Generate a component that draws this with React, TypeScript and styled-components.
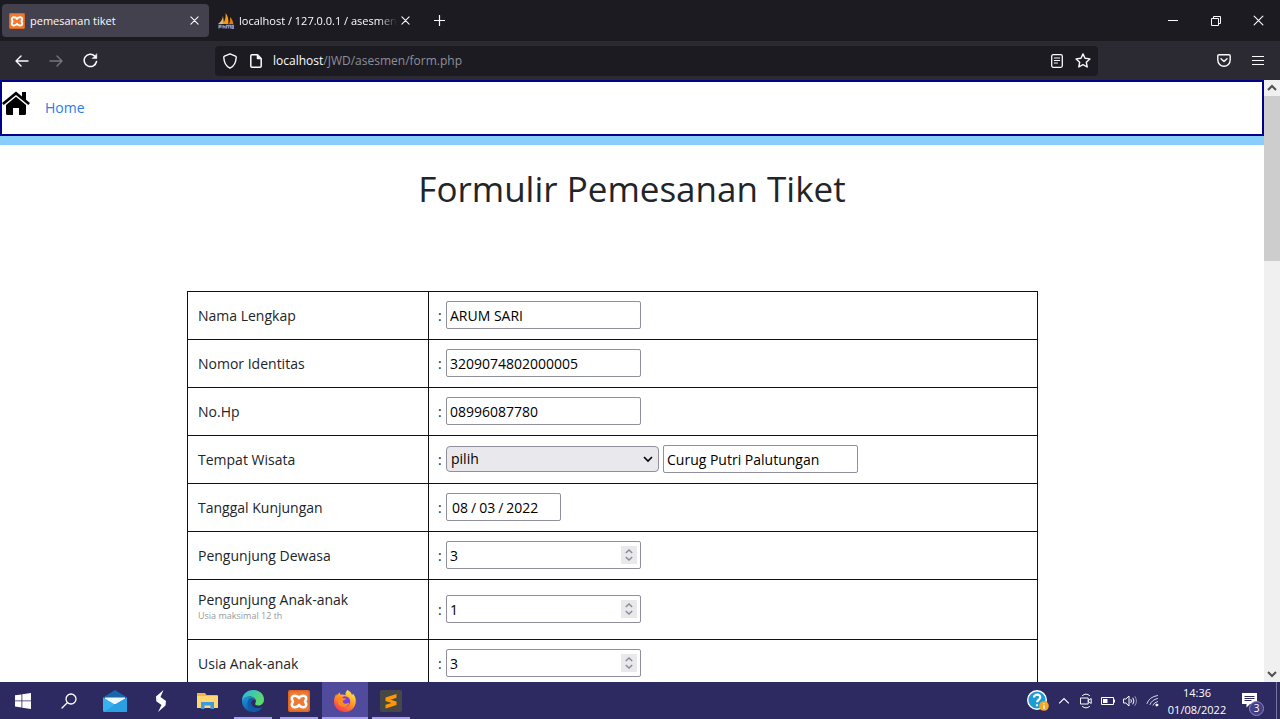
import React from 'react';
import styled, { createGlobalStyle } from 'styled-components';

const GlobalStyle = createGlobalStyle`
  *, *::before, *::after { box-sizing: border-box; }
  body {
    margin: 0;
    font-family: "Open Sans", "Noto Sans", sans-serif;
    font-size: 14px;
    color: #212529;
    background: #fff;
  }
  button, input, select { font: inherit; color: inherit; margin: 0; }
  button { border: 0; padding: 0; background: none; }
  svg { display: block; flex: none; }
`;

const Shell = styled.div`
  display: flex;
  flex-direction: column;
  height: 100vh;
  overflow: hidden;
`;

/* ---------- browser window ---------- */

const TabBar = styled.header`
  display: flex;
  align-items: center;
  flex: none;
  height: 41px;
  padding-left: 2px;
  background: #1c1b22;
  color: #fbfbfe;
  font-size: 11px;
`;

const Tab = styled.div<{ $active?: boolean }>`
  display: flex;
  align-items: center;
  width: ${p => (p.$active ? 207 : 209)}px;
  height: 33px;
  padding: 0 7px 0 7px;
  border-radius: 4px;
  background: ${p => (p.$active ? '#42414d' : 'transparent')};
  margin-right: ${p => (p.$active ? 2 : 0)}px;
`;

const TabTitle = styled.span<{ $fade?: boolean }>`
  flex: 1;
  min-width: 0;
  margin-left: 5px;
  overflow: hidden;
  white-space: nowrap;
  ${p => p.$fade && 'mask-image: linear-gradient(to right, #000 88%, transparent);'}
`;

const IconButton = styled.button<{ $w?: number }>`
  display: flex;
  align-items: center;
  justify-content: center;
  flex: none;
  width: ${p => p.$w ?? 16}px;
  height: 28px;
`;

const WindowControls = styled.div`
  display: flex;
  margin-left: auto;
`;

const Toolbar = styled.nav`
  display: grid;
  grid-template-columns: 215fr 883fr 182fr;
  align-items: center;
  flex: none;
  height: 39px;
  background: #2b2a33;
  color: #fbfbfe;
`;

const ToolGroup = styled.div<{ $end?: boolean }>`
  display: flex;
  padding: ${p => (p.$end ? '0 5px 0 0' : '0 0 0 5px')};
  justify-content: ${p => (p.$end ? 'flex-end' : 'flex-start')};
`;

const AddressBar = styled.div`
  display: flex;
  align-items: center;
  height: 30px;
  padding: 0 2px;
  border-radius: 4px;
  background: #1c1b22;
`;

const Address = styled.div`
  flex: 1;
  padding-left: 4px;
  font-size: 12px;
  color: #8f8f98;
  b { font-weight: 400; color: #fbfbfe; }
`;

/* ---------- page ---------- */

const Viewport = styled.div`
  display: flex;
  flex: 1;
  min-height: 0;
`;

const Page = styled.main`
  flex: 1;
  min-width: 0;
  overflow: hidden;
  background: #fff;
`;

const SiteNav = styled.nav`
  display: flex;
  align-items: center;
  gap: 15px;
  height: 56px;
  border: 2px solid #00008b;
  a { color: #2a7de9; text-decoration: none; line-height: 22px; }
  svg { margin-bottom: 9px; }
`;

const Stripe = styled.div`
  height: 9px;
  background: #87cefa;
`;

const Title = styled.h1`
  margin: 22px 0 0;
  font-size: 35px;
  font-weight: 400;
  line-height: 44px;
  text-align: center;
`;

const FormArea = styled.form`
  width: 890px;
  max-width: 100%;
  margin: 80px auto 0;
`;

const Table = styled.table`
  width: 851px;
  max-width: 100%;
  border-collapse: collapse;
  table-layout: fixed;
  th, td {
    height: 48px;
    border: 1px solid #111;
    text-align: left;
    font-weight: 400;
    line-height: 22px;
  }
  th { width: 241px; padding: 9px 10px; }
  td { padding: 8px 9px 10px; }
`;

const Hint = styled.small`
  display: block;
  margin-bottom: 9px;
  font-size: 9px;
  line-height: 10px;
  color: #999;
`;

const FieldLine = styled.div`
  display: flex;
  align-items: center;
  gap: 4px;
`;

const Colon = styled.span`
  width: 4px;
  padding-top: 2px;
`;

const TextInput = styled.input`
  width: 195px;
  height: 28px;
  padding: 2px 3px 0;
  border: 1px solid #8f8f9d;
  border-radius: 2px;
  background: #fff;
  color: #000;
  outline: 0;
`;

const DateInput = styled(TextInput)`
  width: 115px;
  padding-left: 4px;
  &::-webkit-calendar-picker-indicator { display: none; }
  &::-webkit-datetime-edit-text { padding: 0 2px; }
`;

const NumberBox = styled.div`
  display: flex;
  align-items: center;
  width: 195px;
  height: 28px;
  padding-right: 3px;
  border: 1px solid #8f8f9d;
  border-radius: 2px;
`;

const NumberInput = styled.input`
  flex: 1;
  min-width: 0;
  height: 26px;
  padding: 2px 3px 0;
  border: 0;
  background: none;
  color: #000;
  outline: 0;
  appearance: textfield;
  &::-webkit-inner-spin-button { appearance: none; margin: 0; }
`;

const Spinner = styled.span`
  display: flex;
  align-items: center;
  justify-content: center;
  width: 16px;
  height: 18px;
  background: #e9e9ed;
`;

const SelectBox = styled.span`
  display: grid;
  align-items: center;
  width: 213px;
  height: 26px;
  select, svg { grid-area: 1 / 1; }
  svg { justify-self: end; margin-right: 6px; pointer-events: none; }
`;

const Select = styled.select`
  width: 100%;
  height: 26px;
  padding: 0 4px;
  border: 1px solid #8f8f9d;
  border-radius: 4px;
  background: #e9e9ed;
  color: #000;
  appearance: none;
`;

/* ---------- scroll bar ---------- */

const ScrollRail = styled.div`
  display: flex;
  flex-direction: column;
  flex: none;
  width: 16px;
  background: #f0f0f0;
`;

const ScrollTrack = styled.div`
  flex: 1;
`;

const ScrollThumb = styled.div`
  height: 29%;
  background: #cdcdcd;
`;

const ScrollArrow = styled.button`
  display: grid;
  place-items: center;
  width: 16px;
  height: 16px;
`;

/* ---------- taskbar ---------- */

const Taskbar = styled.footer`
  display: flex;
  justify-content: space-between;
  flex: none;
  height: 37px;
  background: #2d2961;
  color: #fff;
`;

const Apps = styled.div`
  display: flex;
`;

const AppButton = styled.button<{ $open?: boolean; $active?: boolean }>`
  display: flex;
  align-items: center;
  justify-content: center;
  width: 46px;
  background: ${p => {
    const fill = p.$active ? '#504b9c' : 'transparent';
    if (!p.$open) return fill;
    return `linear-gradient(#a8a0ec, #a8a0ec) center bottom / ${p.$active ? 46 : 38}px 2px no-repeat ${fill}`;
  }};
`;

const Tray = styled.div`
  display: flex;
  align-items: center;
  &::after {
    content: "";
    width: 4px;
    height: 100%;
    margin-left: 7px;
    border-left: 1px solid #77749c;
  }
`;

const Clock = styled.time`
  width: 68px;
  font-size: 11px;
  line-height: 17px;
  text-align: center;
  white-space: nowrap;
`;

const NoticeButton = styled(IconButton)`
  position: relative;
`;

const Badge = styled.span`
  position: absolute;
  right: 5px;
  bottom: -1px;
  width: 15px;
  height: 15px;
  border: 1px solid #8b88c4;
  border-radius: 50%;
  background: #443f86;
  font-size: 10px;
  line-height: 13px;
  text-align: center;
`;

/* ---------- drawings ---------- */

const stroke = { fill: 'none', stroke: 'currentColor', strokeLinecap: 'round', strokeLinejoin: 'round' } as const;

const XamppIcon = ({ size }: { size: number }) => (
  <svg width={size} height={size} viewBox="0 0 22 22">
    <rect width="22" height="22" rx="2" fill="#e0661f" />
    <rect x="1.500" y="1.500" width="19" height="19" rx="2" fill="#ee7a33" />
    <path
      d="M11 8.200C12.500 5.400 18.400 4.600 18.200 8.600 18.100 10.200 17 10.600 17 11.500S18.100 12.800 18.200 14.400C18.400 18.400 12.500 17.600 11 14.800 9.500 17.600 3.600 18.400 3.800 14.400 3.900 12.800 5 12.400 5 11.500S3.900 10.200 3.800 8.600C3.600 4.600 9.500 5.400 11 8.200z"
      fill="none"
      stroke="#fff"
      strokeWidth="2.500"
      strokeLinejoin="round"
    />
  </svg>
);

const PhpMyAdminIcon = () => (
  <svg width="16" height="16" viewBox="0 0 16 16">
    <path d="M0 11C3 9 4.500 6 5 3l1 8z" fill="#e0b57a" />
    <path d="M5 11C7 8 8 4 7.600 0c2.600 3 3.200 7 2.800 11z" fill="#f89c0e" />
    <path d="M11 11c1-2 1.400-4 1-7 2 2 3.200 4.500 3.300 7z" fill="#e57d10" />
    <path d="M1 15.500v-3h2v1.500H1.500M5 12v3.500m0-2h2v2M8.500 15.500v-3h2v3m0-3h2v3M14 15.500v-3h1.500v3z" fill="none" stroke="#8c90b5" strokeWidth="1.300" />
  </svg>
);

const Cross = ({ size = 8, w = 1.2 }: { size?: number; w?: number }) => (
  <svg width={size} height={size} viewBox="0 0 10 10" {...stroke} strokeWidth={w}>
    <path d="M1 1l8 8M9 1L1 9" />
  </svg>
);

const Chevron = ({ up, size = 10, color = '#000', w = 1.6 }: { up?: boolean; size?: number; color?: string; w?: number }) => (
  <svg width={size} height={size} viewBox="0 0 10 10" fill="none" stroke={color} strokeWidth={w}>
    <path d={up ? 'M1 7l4-4 4 4' : 'M1 3l4 4 4-4'} />
  </svg>
);

const HouseIcon = () => (
  <svg width="28" height="25" viewBox="0 0 28 25">
    <path d="M14 .5L0 12l1.700 2L14 4l12.300 10L28 12l-4-3.300V1h-4v4.400z" fill="#000" />
    <path d="M14 5.800L4 14v8.500Q4 24 5.500 24H11v-7h6v7h5.500q1.500 0 1.500-1.500V14z" fill="#000" />
  </svg>
);

const EdgeIcon = () => (
  <svg width="24" height="24" viewBox="0 0 24 24">
    <defs>
      <linearGradient id="edgeTop" x1="0" y1="0" x2="1" y2="0.500">
        <stop offset="0" stopColor="#2bb3e8" />
        <stop offset="1" stopColor="#5ddc63" />
      </linearGradient>
      <linearGradient id="edgeBody" x1="0" y1="0" x2="0.600" y2="1">
        <stop offset="0" stopColor="#1b9de2" />
        <stop offset="1" stopColor="#0c4f9e" />
      </linearGradient>
    </defs>
    <path d="M1 12C1 5 6 1 12 1c7 0 11 4.500 11 9.500 0 4-3 6-6 6-2.500 0-3.500-1-2.500-2.500C16 11 13 7.500 9 7.500c-4 0-7 2-8 4.500z" fill="url(#edgeTop)" />
    <path d="M1 12c1-3 4-4.500 7.500-4.500 3 0 5 1.700 5.500 3.500-4-1-5 3-3 6 2.200 3 7 3.500 10.500 1C19.500 21.500 16 23 12 23 5.500 23 1 18 1 12z" fill="url(#edgeBody)" />
    <path d="M8.500 9.500C5 12.500 6 20 12 23c3.800.2 7.500-1.500 9.500-5-3.500 2-8 1.500-10.200-1.200C9.200 14.300 9.800 11 13 10.400c-1-1.400-3-1.900-4.500-.9z" fill="#135ba8" />
  </svg>
);

const FirefoxIcon = () => (
  <svg width="24" height="24" viewBox="0 0 24 24">
    <defs>
      <linearGradient id="foxBody" x1="0.800" y1="0" x2="0.200" y2="1">
        <stop offset="0" stopColor="#fff04a" />
        <stop offset="0.450" stopColor="#ff9a22" />
        <stop offset="1" stopColor="#fa2c5c" />
      </linearGradient>
    </defs>
    <path d="M14.500 1c3.500 1.800 4.200 4 4.600 5.200L20 4.500c2 2.500 3 5 2.800 8C22.500 18.800 18 23 12 23S1 18.500 1 12.500c0-3.500 1.200-6 2.500-7.500l.3 1.800C5 4.500 5.800 4 7 3.500l.2 2.300c2-.6 4-.2 5.300.6C12 4.500 13 2.200 14.500 1z" fill="url(#foxBody)" />
    <circle cx="12" cy="12.500" r="5.200" fill="#7a3fe0" />
    <path d="M5 9c2-1.500 4-1 5.500.2l2.500.4c.2 1-2 1.700-3 2.200-.6 2 1.500 3.600 4 2.600 1.600-.6 2.200-.2 2 .4-1 2.600-4.200 4-7 3C5.500 16.600 4 13 5 9z" fill="#ff8a1e" />
  </svg>
);

const MailIcon = () => (
  <svg width="24" height="22" viewBox="0 0 24 22">
    <path d="M0 7.500L12 0l12 7.500v4H0z" fill="#1767ab" />
    <path d="M2 7.500h20V14H2z" fill="#f2f8fc" />
    <path d="M0 7.500l12 7 12-7v13q0 1.500-1.500 1.500h-21Q0 22 0 20.500z" fill="#35b3ee" />
    <path d="M1 22L12 14.500 24 7.500v13q0 1.500-1.500 1.500z" fill="#2a9fe4" />
  </svg>
);

const FolderIcon = () => (
  <svg width="21" height="17" viewBox="0 0 21 17">
    <path d="M0 1h8l1.500 2H20q1 0 1 1v12H0z" fill="#f4b73c" />
    <path d="M0 4h21v12H0z" fill="#ffd873" />
    <path d="M4 17v-7h13v7h-3.500v-3.500h-6V17z" fill="#3d9be0" />
  </svg>
);

const TextField = ({ id, value }: { id: string; value: string }) => <TextInput id={id} type="text" defaultValue={value} />;

const NumberField = ({ id, value }: { id: string; value: number }) => (
  <NumberBox>
    <NumberInput id={id} type="number" defaultValue={value} />
    <Spinner>
      <svg width="8" height="12" viewBox="0 0 8 12" fill="none" stroke="#8b8b95" strokeWidth="1.500">
        <path d="M.8 4L4 1l3.200 3M.8 8L4 11l3.200-3" />
      </svg>
    </Spinner>
  </NumberBox>
);

const Row = ({ id, label, hint, children }: { id: string; label: string; hint?: string; children: React.ReactNode }) => (
  <tr>
    <th scope="row">
      <label htmlFor={id}>{label}</label>
      {hint && <Hint>{hint}</Hint>}
    </th>
    <td>
      <FieldLine>
        <Colon>:</Colon>
        {children}
      </FieldLine>
    </td>
  </tr>
);

export default function App() {
  return (
    <Shell>
      <GlobalStyle />
      <TabBar>
        <Tab $active>
          <XamppIcon size={16} />
          <TabTitle>pemesanan tiket</TabTitle>
          <IconButton aria-label="Close tab"><Cross size={9} /></IconButton>
        </Tab>
        <Tab>
          <PhpMyAdminIcon />
          <TabTitle $fade>localhost / 127.0.0.1 / asesmen /</TabTitle>
          <IconButton aria-label="Close tab"><Cross size={9} /></IconButton>
        </Tab>
        <IconButton $w={38} aria-label="New tab">
          <svg width="11" height="11" viewBox="0 0 11 11" {...stroke} strokeWidth="1.200"><path d="M5.500 .5v10M.5 5.500h10" /></svg>
        </IconButton>
        <WindowControls>
          <IconButton $w={43} aria-label="Minimize">
            <svg width="10" height="10" viewBox="0 0 10 10" {...stroke}><path d="M0 4.500h10" /></svg>
          </IconButton>
          <IconButton $w={43} aria-label="Restore">
            <svg width="10" height="10" viewBox="0 0 10 10" fill="none" stroke="currentColor"><path d="M.5 2.500h7v7h-7zM2.500 2.500v-2h7v7h-2" /></svg>
          </IconButton>
          <IconButton $w={43} aria-label="Close"><Cross size={11} w={1} /></IconButton>
        </WindowControls>
      </TabBar>

      <Toolbar>
        <ToolGroup>
          <IconButton $w={34} aria-label="Back">
            <svg width="14" height="12" viewBox="0 0 14 12" {...stroke} strokeWidth="1.400"><path d="M13 6H1m5-5L1 6l5 5" /></svg>
          </IconButton>
          <IconButton $w={34} aria-label="Forward">
            <svg width="14" height="12" viewBox="0 0 14 12" {...stroke} stroke="#77767f" strokeWidth="1.400"><path d="M1 6h12M8 1l5 5-5 5" /></svg>
          </IconButton>
          <IconButton $w={34} aria-label="Reload">
            <svg width="15" height="15" viewBox="0 0 15 15" {...stroke} strokeWidth="1.500">
              <path d="M13.500 8.500A6.200 6.200 0 1 1 11.800 3l1 1" />
              <path d="M13.800 1v4.500H9.300z" fill="currentColor" strokeWidth=".5" />
            </svg>
          </IconButton>
        </ToolGroup>
        <AddressBar>
          <IconButton $w={26} aria-label="Tracking protection">
            <svg width="14" height="16" viewBox="0 0 14 16" {...stroke} strokeWidth="1.400"><path d="M7 .8l5.500 2.400q.8.400.7 1.300C13 9 11.500 13 7 15.200 2.500 13 1 9 .8 4.500q-.1-.9.700-1.300z" /></svg>
          </IconButton>
          <IconButton $w={26} aria-label="Site information">
            <svg width="12" height="14" viewBox="0 0 12 14" {...stroke} strokeWidth="1.500">
              <path d="M2 .8h5.500l3.700 3.700V12q0 1.200-1.200 1.200H2Q.8 13.200.8 12V2Q.8.800 2 .8z" />
              <path d="M7 1v4h4z" fill="currentColor" strokeWidth=".5" />
            </svg>
          </IconButton>
          <Address><b>localhost</b>/JWD/asesmen/form.php</Address>
          <IconButton $w={26} aria-label="Reader view">
            <svg width="12" height="14" viewBox="0 0 12 14" {...stroke} strokeWidth="1.300">
              <rect x=".7" y=".7" width="10.600" height="12.600" rx="1.500" />
              <path d="M3.300 4h5.400M3.300 6.500h5.400M3.300 9h3.200" strokeWidth="1" />
            </svg>
          </IconButton>
          <IconButton $w={26} aria-label="Bookmark">
            <svg width="16" height="15" viewBox="0 0 16 15" {...stroke} strokeWidth="1.400"><path d="M8 .9l2 4.400 4.900.6-3.600 3.300.9 4.800L8 11.700 3.800 14l.9-4.800L1.100 5.900 6 5.300z" /></svg>
          </IconButton>
        </AddressBar>
        <ToolGroup $end>
          <IconButton $w={34} aria-label="Pocket">
            <svg width="14" height="13" viewBox="0 0 14 13" {...stroke} strokeWidth="1.400"><path d="M2 .8h10q1.200 0 1.200 1.200v4a6.200 6.200 0 0 1-12.400 0V2Q.8.800 2 .8zM4 4.800l3 2.800 3-2.800" /></svg>
          </IconButton>
          <IconButton $w={34} aria-label="Menu">
            <svg width="12" height="11" viewBox="0 0 12 11" {...stroke} strokeWidth="1.200"><path d="M.5 1.500h11M.5 5.500h11M.5 9.500h11" /></svg>
          </IconButton>
        </ToolGroup>
      </Toolbar>

      <Viewport>
        <Page>
          <SiteNav>
            <HouseIcon />
            <a href="#home">Home</a>
          </SiteNav>
          <Stripe />
          <Title>Formulir Pemesanan Tiket</Title>
          <FormArea>
            <Table>
              <tbody>
                <Row id="nama" label="Nama Lengkap"><TextField id="nama" value="ARUM SARI" /></Row>
                <Row id="identitas" label="Nomor Identitas"><TextField id="identitas" value="3209074802000005" /></Row>
                <Row id="hp" label="No.Hp"><TextField id="hp" value="08996087780" /></Row>
                <Row id="wisata" label="Tempat Wisata">
                  <SelectBox>
                    <Select id="wisata" defaultValue="pilih"><option>pilih</option></Select>
                    <Chevron />
                  </SelectBox>
                  <TextInput type="text" aria-label="Nama tempat wisata" defaultValue="Curug Putri Palutungan" />
                </Row>
                <Row id="tanggal" label="Tanggal Kunjungan"><DateInput id="tanggal" type="date" defaultValue="2022-08-03" /></Row>
                <Row id="dewasa" label="Pengunjung Dewasa"><NumberField id="dewasa" value={3} /></Row>
                <Row id="anak" label="Pengunjung Anak-anak" hint="Usia maksimal 12 th"><NumberField id="anak" value={1} /></Row>
                <Row id="usia" label="Usia Anak-anak"><NumberField id="usia" value={3} /></Row>
              </tbody>
            </Table>
          </FormArea>
        </Page>
        <ScrollRail>
          <ScrollArrow aria-label="Scroll up"><Chevron up color="#505050" w={2} /></ScrollArrow>
          <ScrollTrack><ScrollThumb /></ScrollTrack>
          <ScrollArrow aria-label="Scroll down"><Chevron color="#505050" w={2} /></ScrollArrow>
        </ScrollRail>
      </Viewport>

      <Taskbar>
        <Apps>
          <AppButton aria-label="Start">
            <svg width="16" height="16" viewBox="0 0 16 16" fill="#fff"><path d="M0 2.300l6.500-.9v6.100H0zM7.300 1.300L16 0v7.500H7.300zM0 8.300h6.500v6.100L0 13.500zM7.300 8.300H16V16l-8.700-1.300z" /></svg>
          </AppButton>
          <AppButton aria-label="Search">
            <svg width="16" height="16" viewBox="0 0 16 16" {...stroke} strokeWidth="1.300"><circle cx="10" cy="6" r="5" /><path d="M6.300 9.700L1 15" /></svg>
          </AppButton>
          <AppButton aria-label="Mail"><MailIcon /></AppButton>
          <AppButton aria-label="Shortcut app">
            <svg width="12" height="22" viewBox="0 0 12 22" fill="#fff"><path d="M8.500 0L1 6.500l.3 4.800L6.500 15 3 22l7.500-6.500.5-4.500L5.500 7z" /></svg>
          </AppButton>
          <AppButton aria-label="File Explorer"><FolderIcon /></AppButton>
          <AppButton $open aria-label="Edge"><EdgeIcon /></AppButton>
          <AppButton $open aria-label="XAMPP"><XamppIcon size={22} /></AppButton>
          <AppButton $open $active aria-label="Firefox"><FirefoxIcon /></AppButton>
          <AppButton $open aria-label="Sublime Text">
            <svg width="22" height="22" viewBox="0 0 22 22">
              <rect width="22" height="22" rx="2" fill="#474747" />
              <path d="M5.500 7.500L16.500 4v3.800L10.500 9.700l6 1.900v3.500L5.500 18.500v-3.700l6-1.900-6-1.900z" fill="#ff9800" />
            </svg>
          </AppButton>
        </Apps>
        <Tray>
          <IconButton $w={30} aria-label="Help">
            <svg width="22" height="22" viewBox="0 0 22 22">
              <circle cx="10" cy="10" r="9.300" fill="#1d9bd7" stroke="#fff" strokeWidth="1.400" />
              <path d="M7 7.500C7 3.500 13.500 3.800 13.200 7.500 13 9.800 10 9.800 10 12.300M10 14.200v2" fill="none" stroke="#fff" strokeWidth="2.200" />
              <circle cx="17" cy="16" r="4.800" fill="#f5a623" />
              <path d="M17 13v1.200M17 15.200V19" stroke="#fff" strokeWidth="1.300" />
            </svg>
          </IconButton>
          <IconButton $w={22} aria-label="Show hidden icons"><Chevron up size={12} color="#fff" w={1} /></IconButton>
          <IconButton $w={22} aria-label="Meet now">
            <svg width="12" height="16" viewBox="0 0 12 16" {...stroke}><path d="M2.500 2.500q3.500-3 7 0M2.500 13.500q3.500 3 7 0M.8 5h7.400v6H.8zM8.200 7.500l3-2v5l-3-2" /></svg>
          </IconButton>
          <IconButton $w={22} aria-label="Battery">
            <svg width="14" height="8" viewBox="0 0 14 8"><path d="M.5 .5h12v7H.5zM13.500 2.500v3" fill="none" stroke="#fff" /><path d="M2 2h4.500v4H2z" fill="#fff" /></svg>
          </IconButton>
          <IconButton $w={22} aria-label="Volume">
            <svg width="15" height="12" viewBox="0 0 15 12" {...stroke}><path d="M.8 4h2L6 1v10L2.800 8h-2zM8 4.500q1 1.500 0 3M10 3q2 3 0 6" /><path d="M12 1.500q3 4.500 0 9" opacity=".5" /></svg>
          </IconButton>
          <IconButton $w={22} aria-label="Network">
            <svg width="13" height="13" viewBox="0 0 13 13" {...stroke}><path d="M1 9.500Q3 3 11.500 1.500M4 10.500Q5.500 6 11.500 4.500M7 11.200Q8 8.500 11.500 7.500" opacity=".8" /><circle cx="10.800" cy="11" r="1" fill="#fff" /></svg>
          </IconButton>
          <Clock>14:36<br />01/08/2022</Clock>
          <NoticeButton $w={38} aria-label="Notifications, 3 new">
            <svg width="16" height="16" viewBox="0 0 16 16"><path d="M0 0h15v11H8l-3.500 3.500V11H0z" fill="#fff" /><path d="M2.500 3.500h10M2.500 5.500h10M2.500 7.500h7" stroke="#2d2961" /></svg>
            <Badge>3</Badge>
          </NoticeButton>
        </Tray>
      </Taskbar>
    </Shell>
  );
}
